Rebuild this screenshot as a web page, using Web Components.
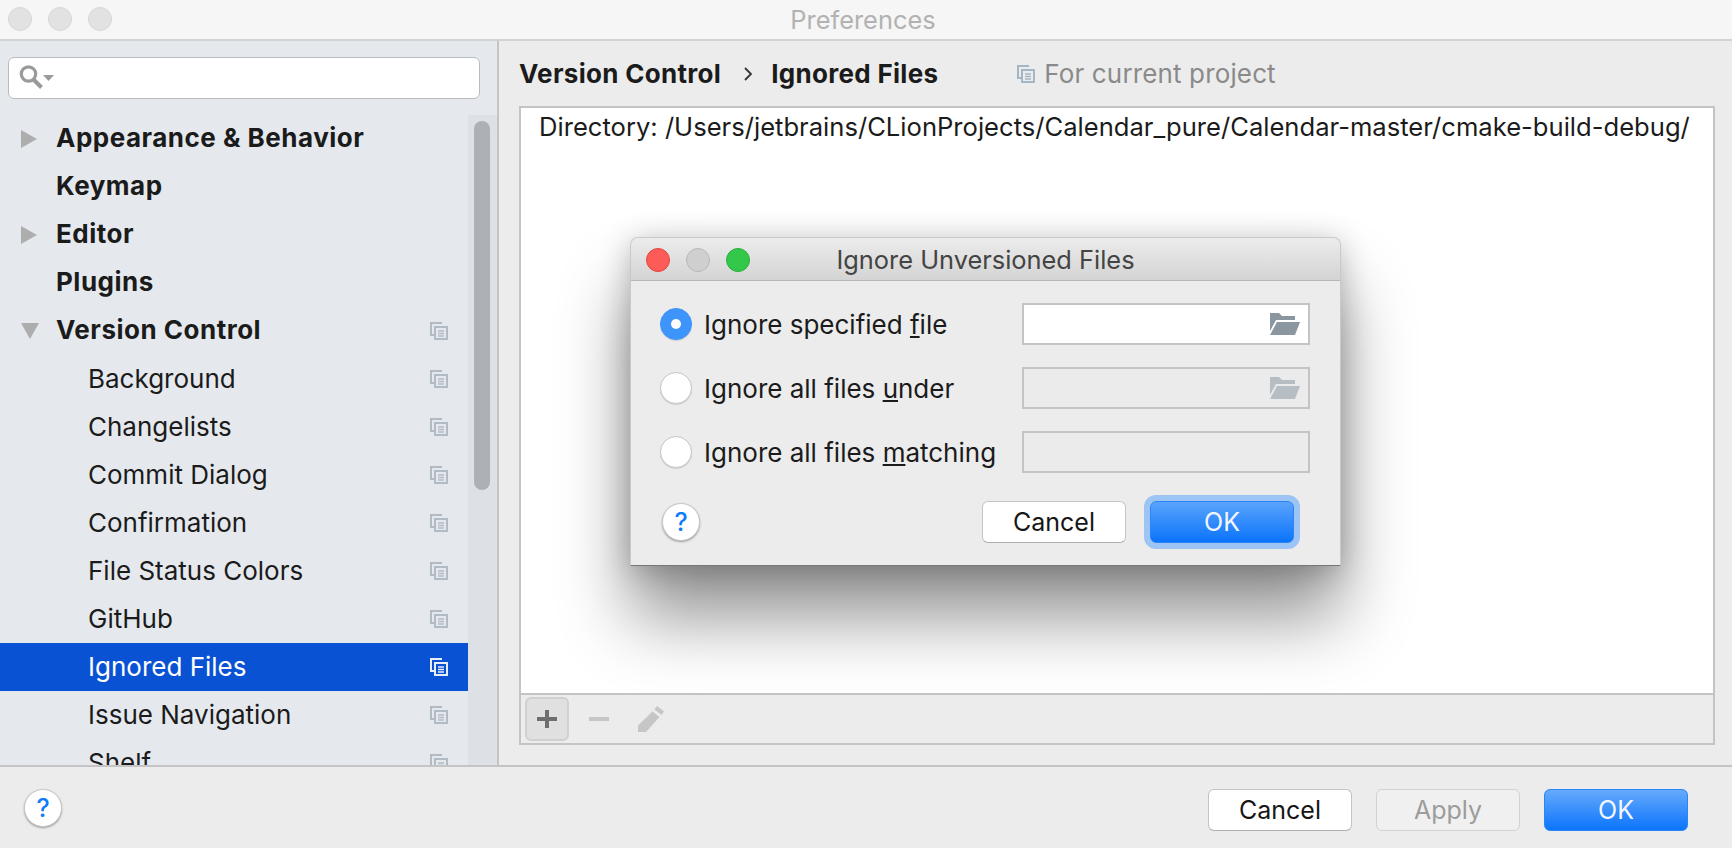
<!DOCTYPE html>
<html>
<head>
<meta charset="utf-8">
<title>Preferences</title>
<style>
  html, body { margin: 0; height: 100%; overflow: hidden; }
  body { font-family: Inter, "Liberation Sans", sans-serif; font-size: 25px; color: #1b1b1b; }
</style>
</head>
<body>
<pref-window></pref-window>

<script>
const COPY_ICON = `<svg width="18" height="18" viewBox="0 0 18 18" fill="none" stroke="currentColor" stroke-width="2">
  <path d="M12 1H1v12h3"/><rect x="5" y="5" width="12" height="12"/><path d="M8 9h6M8 11.5h6M8 14h6" stroke-width="1.5"/></svg>`;

const FOLDER_ICON = `<svg width="30" height="22" viewBox="0 0 30 22" fill="currentColor">
  <path d="M0 0h9l3 3h13v4H6L0 18z"/><path d="M7 9h23l-5 13H0z"/></svg>`;

class TrafficLights extends HTMLElement {
  constructor() {
    super();
    this.attachShadow({ mode: "open" });
    this.shadowRoot.innerHTML = `
    <style>
      :host { display: flex; gap: 16px; }
      i { width: 24px; height: 24px; box-sizing: border-box; border-radius: 50%; border: 1px solid #d6d6d6; background: #e2e2e2; display: block; }
      :host([active]) i:nth-of-type(1) { background: #fc5b57; border-color: #e2463f; }
      :host([active]) i:nth-of-type(2) { background: #cfcfcf; border-color: #b8b8b8; }
      :host([active]) i:nth-of-type(3) { background: #34c84a; border-color: #2aae3c; }
    </style>
    <i></i><i></i><i></i>`;
  }
}
customElements.define("traffic-lights", TrafficLights);

class HelpButton extends HTMLElement {
  constructor() {
    super();
    this.attachShadow({ mode: "open" });
    this.shadowRoot.innerHTML = `
    <style>
      :host { display: flex; width: 38px; height: 38px; box-sizing: border-box; border-radius: 50%; background: #fff;
        border: 1px solid #c8c8c8; box-shadow: 0 1px 2px rgba(0,0,0,.35); align-items: center; justify-content: center;
        color: #0f7bfa; font-size: 25px; font-weight: 500; flex: none; }
    </style>?`;
  }
}
customElements.define("help-button", HelpButton);

class MacButton extends HTMLElement {
  constructor() {
    super();
    this.attachShadow({ mode: "open" });
    this.shadowRoot.innerHTML = `
    <style>
      :host { display: flex; width: 144px; height: 42px; box-sizing: border-box; border-radius: 6px; background: #fff;
        border: 1px solid #c4c4c4; border-bottom-color: #aeaeae; align-items: center; justify-content: center;
        font-size: 25px; color: #161616; flex: none; }
      :host([disabled]) { background: #f0f0f0; border-color: #d2d2d2; color: #9c9c9c; }
      :host([primary]) { background: linear-gradient(#66aafc, #0b74fb); border-color: #2a86f8; color: #f2f7ff; }
      :host([focused]) { box-shadow: 0 0 0 6px #9cc4f4; background: linear-gradient(#5aa3fc, #0b74fb); }
    </style>
    <slot></slot>`;
  }
}
customElements.define("mac-button", MacButton);

class SearchField extends HTMLElement {
  constructor() {
    super();
    this.attachShadow({ mode: "open" });
    this.shadowRoot.innerHTML = `
    <style>
      :host { display: flex; height: 42px; box-sizing: border-box; background: #fff; border: 1px solid #b9bcbf; border-radius: 6px;
        align-items: center; padding-left: 10px; }
      svg { display: block; }
    </style>
    <svg width="36" height="28" viewBox="0 0 36 28">
      <circle cx="9.500" cy="10" r="7.200" fill="none" stroke="#9a9a9a" stroke-width="3.200"/>
      <path d="M14.500 15.500l8 8" stroke="#9a9a9a" stroke-width="4"/>
      <path d="M24 11h11l-5.500 6z" fill="#9a9a9a"/>
    </svg>`;
  }
}
customElements.define("search-field", SearchField);

class TreeRow extends HTMLElement {
  constructor() {
    super();
    this.attachShadow({ mode: "open" });
    const arrow = this.getAttribute("arrow");
    let arrowSvg = "";
    if (arrow === "right") arrowSvg = `<svg width="16" height="18" viewBox="0 0 16 18"><path d="M0 0l16 9L0 18z" fill="#adadad"/></svg>`;
    if (arrow === "down") arrowSvg = `<svg width="18" height="16" viewBox="0 0 18 16"><path d="M0 0h18L9 16z" fill="#adadad"/></svg>`;
    this.shadowRoot.innerHTML = `
    <style>
      :host { display: flex; height: 48px; align-items: center; color: #1b1b1b; white-space: nowrap; font-size: 26px; }
      :host([bold]) { font-weight: 700; letter-spacing: .5px; }
      :host([selected]) { background: #0a52d4; color: #fff; }
      .arrow { width: 56px; box-sizing: border-box; padding-left: 21px; display: flex; flex: none; }
      :host([child]) .arrow { width: 88px; }
      .label { flex: 1; padding-bottom: 2px; }
      :host([bold]) .label { padding-bottom: 3px; }
      .copy { width: 18px; height: 18px; margin-right: 20px; color: #b1bbc3; }
      :host([selected]) .copy { color: #e6ecf8; }
      svg { display: block; }
    </style>
    <span class="arrow">${arrowSvg}</span>
    <span class="label"><slot></slot></span>
    ${this.hasAttribute("copy") ? `<span class="copy">${COPY_ICON}</span>` : ""}`;
  }
}
customElements.define("tree-row", TreeRow);

class PrefSidebar extends HTMLElement {
  constructor() {
    super();
    this.attachShadow({ mode: "open" });
    this.shadowRoot.innerHTML = `
    <style>
      :host { display: flex; flex-direction: column; width: 499px; flex: none; box-sizing: border-box; background: #e5e9ee;
        border-right: 2px solid #c4c4c4; overflow: hidden; }
      search-field { margin: 16px 17px 16px 8px; }
      .tree { flex: 1; display: flex; min-height: 0; }
      .rows { flex: 1; overflow: hidden; }
      .track { width: 29px; background: #dde1e5; flex: none; padding: 6px 7px 0 6px; box-sizing: border-box; }
      .thumb { height: 369px; border-radius: 8px; background: #adb0b4; }
    </style>
    <search-field></search-field>
    <div class="tree">
      <div class="rows"><slot></slot></div>
      <div class="track"><div class="thumb"></div></div>
    </div>`;
  }
}
customElements.define("pref-sidebar", PrefSidebar);

class ToolStrip extends HTMLElement {
  constructor() {
    super();
    this.attachShadow({ mode: "open" });
    this.shadowRoot.innerHTML = `
    <style>
      :host { display: flex; height: 50px; box-sizing: border-box; border-top: 2px solid #c4c4c4; background: #ececec;
        align-items: center; padding-left: 4px; flex: none; }
      .btn { width: 44px; height: 44px; box-sizing: border-box; display: flex; align-items: center; justify-content: center; margin-right: 8px; }
      .btn.on { background: #e0e0e0; border: 2px solid #d0d0d0; border-radius: 6px; }
      svg { display: block; }
    </style>
    <div class="btn on"><svg width="20" height="18" viewBox="0 0 20 18"><path d="M8 0h4v7h8v4h-8v7H8v-7H0V7h8z" fill="#6e6e6e"/></svg></div>
    <div class="btn"><svg width="20" height="4" viewBox="0 0 20 4"><path d="M0 0h20v4H0z" fill="#c6c6c6"/></svg></div>
    <div class="btn"><svg width="28" height="28" viewBox="0 0 28 28"><path d="M20 1l7 5.500-2.500 3.500-7-5.500zM15.500 6.500l7 5.500L9 27H1v-6.500z" fill="#c6c6c6"/></svg></div>`;
  }
}
customElements.define("tool-strip", ToolStrip);

class PrefMain extends HTMLElement {
  constructor() {
    super();
    this.attachShadow({ mode: "open" });
    this.shadowRoot.innerHTML = `
    <style>
      :host { display: flex; flex-direction: column; flex: 1; min-width: 0; background: #ececec; padding: 0 17px 20px 20px; }
      .crumbs { height: 65px; display: flex; align-items: center; white-space: nowrap; font-size: 26px; }
      b { font-weight: 700; color: #1b1b1b; letter-spacing: .3px; }
      .sep { width: 50px; display: flex; justify-content: center; padding-left: 3px; box-sizing: border-box; }
      .scope { display: flex; align-items: center; margin-left: 79px; color: #8a8a8a; gap: 9px; letter-spacing: .14px; }
      .scope span { display: block; width: 18px; height: 18px; color: #a3b6c6; }
      svg { display: block; }
      .box { flex: 1; display: flex; flex-direction: column; border: 2px solid #c4c4c4; min-height: 0; }
      .list { flex: 1; background: #fff; padding: 4px 18px; white-space: nowrap; line-height: 30px; color: #1b1b1b; font-size: 25.600px; }
    </style>
    <div class="crumbs">
      <b>Version Control</b>
      <span class="sep"><svg width="8" height="14" viewBox="0 0 8 14"><path d="M1 1l6 6-6 6" fill="none" stroke="#333" stroke-width="1.800"/></svg></span>
      <b>Ignored Files</b>
      <div class="scope"><span>${COPY_ICON}</span>For current project</div>
    </div>
    <div class="box">
      <div class="list">Directory: /Users/jetbrains/CLionProjects/Calendar_pure/Calendar-master/cmake-build-debug/</div>
      <tool-strip></tool-strip>
    </div>`;
  }
}
customElements.define("pref-main", PrefMain);

class IgnoreOption extends HTMLElement {
  constructor() {
    super();
    this.attachShadow({ mode: "open" });
    const field = this.getAttribute("field");
    const on = this.hasAttribute("checked");
    let folder = "";
    if (field === "browse" || field === "browse-off") folder = `<span class="folder">${FOLDER_ICON}</span>`;
    this.shadowRoot.innerHTML = `
    <style>
      :host { display: flex; height: 42px; align-items: center; white-space: nowrap; color: #1b1b1b; font-size: 26px; }
      .radio { width: 32px; height: 32px; box-sizing: border-box; border-radius: 50%; background: #fff; border: 1px solid #c6c6c6;
        box-shadow: 0 1px 1px rgba(0,0,0,.12); flex: none; margin-right: 12px; display: flex; align-items: center; justify-content: center; }
      .radio.on { background: #3d94fb; border-color: #3d94fb; }
      .radio.on::after { content: ""; width: 10px; height: 10px; border-radius: 50%; background: #fff; }
      .label { width: 318px; flex: none; }
      .field { flex: 1; height: 42px; box-sizing: border-box; border: 2px solid #c4c4c4; background: #ebebeb;
        display: flex; align-items: center; justify-content: flex-end; padding-right: 8px; }
      .field.live { background: #fff; color: #8a96a0; }
      .field.off { color: #b6bec4; }
      svg { display: block; }
    </style>
    <span class="radio ${on ? "on" : ""}"></span>
    <span class="label"><slot></slot></span>
    <span class="field ${field === "browse" ? "live" : "off"}">${folder}</span>`;
  }
}
customElements.define("ignore-option", IgnoreOption);

class IgnoreDialog extends HTMLElement {
  constructor() {
    super();
    this.attachShadow({ mode: "open" });
    this.shadowRoot.innerHTML = `
    <style>
      :host { position: absolute; left: 630px; top: 237px; width: 711px; height: 329px; display: flex; flex-direction: column;
        box-sizing: border-box; background: #ececec; border-radius: 8px 8px 0 0; border: 1px solid #c9c9c9; border-bottom-color: #777;
        box-shadow: 0 52px 70px rgba(0,0,0,.42), 0 4px 30px rgba(0,0,0,.24); }
      .head { height: 43px; flex: none; box-sizing: border-box; position: relative; display: flex; align-items: center; justify-content: center;
        background: linear-gradient(#ececec, #d4d4d4); border-bottom: 1px solid #b6b6b6; border-radius: 8px 8px 0 0; color: #444; font-size: 25.400px; }
      traffic-lights { position: absolute; left: 15px; top: 10px; }
      .body { flex: 1; padding: 22px 30px 0 29px; display: flex; flex-direction: column; gap: 22px; }
      .foot { display: flex; align-items: center; margin-top: 6px; padding-left: 2px; padding-right: 16px; }
      .spacer { flex: 1; }
      mac-button + mac-button { margin-left: 24px; }
    </style>
    <div class="head"><traffic-lights active></traffic-lights>Ignore Unversioned Files</div>
    <div class="body"><slot></slot>
      <div class="foot">
        <help-button></help-button><span class="spacer"></span>
        <mac-button>Cancel</mac-button><mac-button primary focused>OK</mac-button>
      </div>
    </div>`;
  }
}
customElements.define("ignore-dialog", IgnoreDialog);

class PrefWindow extends HTMLElement {
  constructor() {
    super();
    this.attachShadow({ mode: "open" });
    this.shadowRoot.innerHTML = `
    <style>
      :host { display: flex; flex-direction: column; height: 848px; width: 1732px; position: relative; background: #ececec; overflow: hidden; }
      .title { height: 41px; box-sizing: border-box; flex: none; background: #f6f6f6; border-bottom: 2px solid #d2d2d2; display: flex; align-items: center;
        justify-content: center; position: relative; color: #b2b2b2; font-size: 25.400px; padding-right: 6px; }
      traffic-lights { position: absolute; left: 8px; top: 7px; }
      .split { flex: 1; display: flex; min-height: 0; }
      .foot { height: 83px; flex: none; box-sizing: border-box; border-top: 2px solid #c4c4c4; display: flex; align-items: flex-start; padding: 22px 44px 0 24px; }
      .foot help-button { margin-right: auto; }
      mac-button + mac-button { margin-left: 24px; }
    </style>
    <div class="title"><traffic-lights></traffic-lights>Preferences</div>
    <div class="split">
      <pref-sidebar>
        <tree-row bold arrow="right">Appearance &amp; Behavior</tree-row>
        <tree-row bold>Keymap</tree-row>
        <tree-row bold arrow="right">Editor</tree-row>
        <tree-row bold>Plugins</tree-row>
        <tree-row bold arrow="down" copy>Version Control</tree-row>
        <tree-row child copy>Background</tree-row>
        <tree-row child copy>Changelists</tree-row>
        <tree-row child copy>Commit Dialog</tree-row>
        <tree-row child copy>Confirmation</tree-row>
        <tree-row child copy>File Status Colors</tree-row>
        <tree-row child copy>GitHub</tree-row>
        <tree-row child copy selected>Ignored Files</tree-row>
        <tree-row child copy>Issue Navigation</tree-row>
        <tree-row child copy>Shelf</tree-row>
      </pref-sidebar>
      <pref-main></pref-main>
    </div>
    <div class="foot">
      <help-button></help-button>
      <mac-button>Cancel</mac-button>
      <mac-button disabled>Apply</mac-button>
      <mac-button primary>OK</mac-button>
    </div>
    <ignore-dialog>
      <ignore-option field="browse" checked>Ignore specified <u>f</u>ile</ignore-option>
      <ignore-option field="browse-off">Ignore all files <u>u</u>nder</ignore-option>
      <ignore-option field="none">Ignore all files <u>m</u>atching</ignore-option>
    </ignore-dialog>`;
  }
}
customElements.define("pref-window", PrefWindow);
</script>
</body>
</html>
